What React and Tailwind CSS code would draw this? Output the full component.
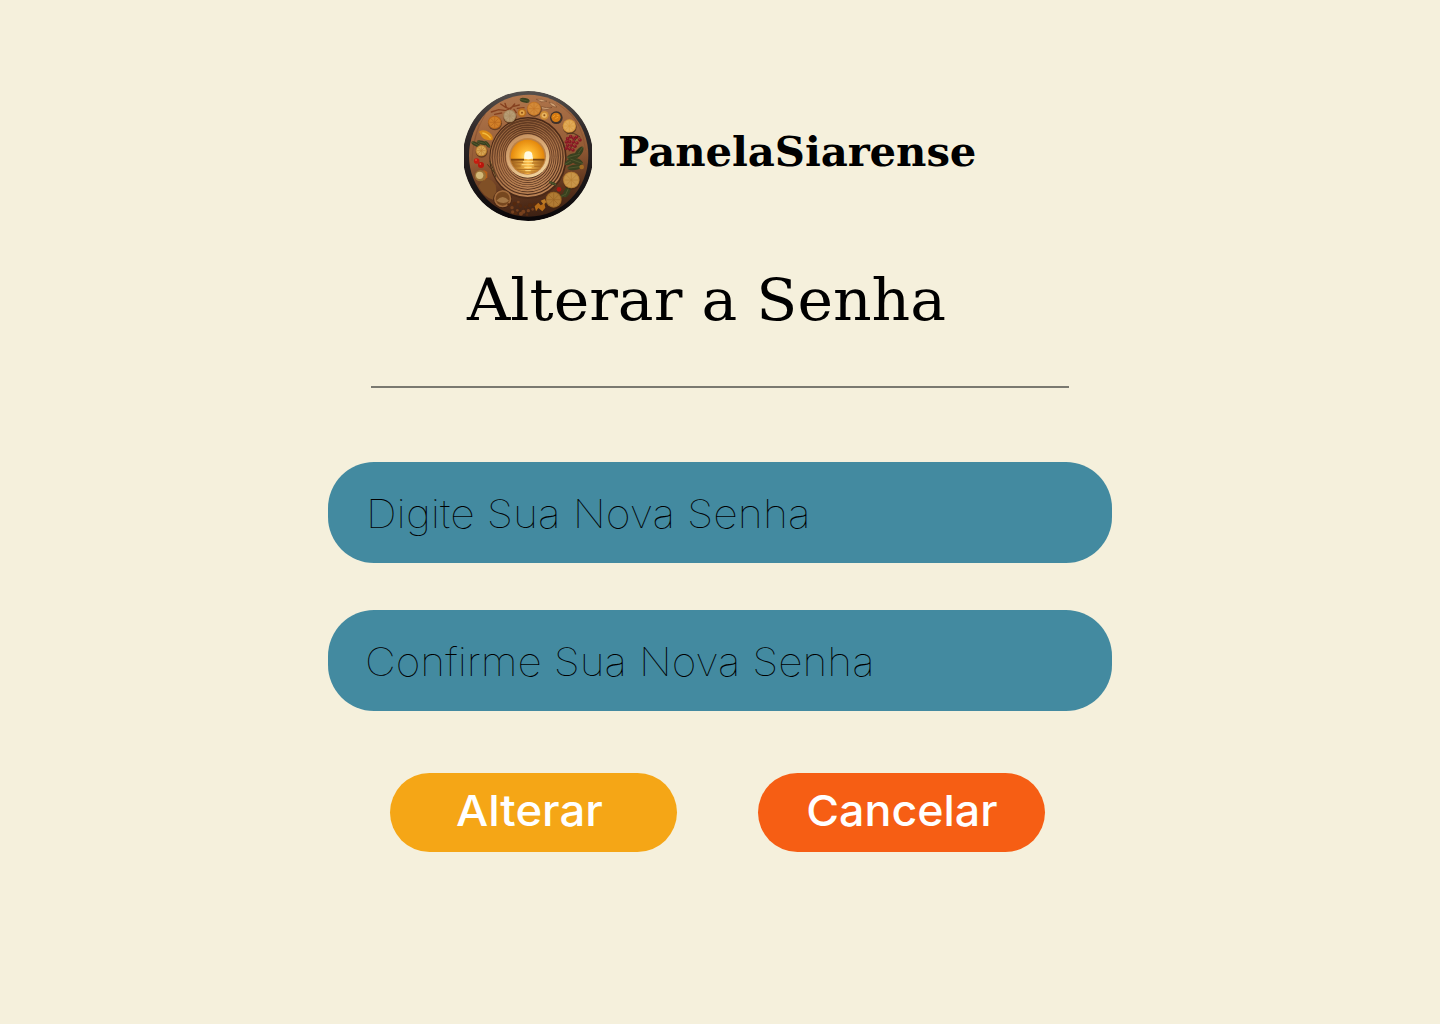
const citrus = [
  { x: 234, y: 74, r: 21, c: '#c47628', i: '#d38a38' },
  { x: 116, y: 115, r: 20, c: '#b8661c', i: '#d18029' },
  { x: 340, y: 126, r: 20, c: '#d7973d', i: '#e0aa58' },
  { x: 76, y: 200, r: 17, c: '#bd8030', i: '#d7a654' },
  { x: 346, y: 288, r: 25, c: '#b77e34', i: '#c89549' },
  { x: 293, y: 347, r: 24, c: '#9b6524', i: '#b07b34' },
  { x: 161, y: 96, r: 19, c: '#a98b62', i: '#b79d75' },
];

const rings = [112, 104, 97, 90, 84, 78, 72, 66];

const berries = [
  [335, 164], [344, 158], [353, 163], [362, 159], [372, 168], [331, 174], [341, 173],
  [352, 174], [363, 177], [335, 184], [346, 184], [357, 187], [341, 195], [351, 198], [331, 193],
];

const leaves = [
  [206, 49, 15, 7, 12], [60, 181, 15, 6, 28], [78, 176, 16, 6, 15], [94, 181, 12, 5, 50],
  [369, 205, 20, 9, -55], [352, 216, 20, 8, -15], [343, 232, 19, 8, -30], [362, 232, 20, 9, 20],
  [356, 250, 22, 8, -8], [333, 323, 18, 9, -65], [290, 298, 12, 4, 25], [318, 336, 13, 5, -25],
];

const crumbs = [
  [158, 362], [168, 371], [176, 359], [184, 379], [193, 366], [202, 383], [208, 369], [217, 380],
  [222, 364], [230, 376], [179, 388], [195, 389], [213, 392], [170, 384], [236, 362], [187, 354],
];

function Logo() {
  return (
    <svg className="block h-[130px] w-32 shrink-0" viewBox="24 21 384 390" role="img">
      <defs>
        <linearGradient id="rim" x1="0" y1="0" x2="0" y2="1">
          <stop offset="0" stopColor="#55504d" />
          <stop offset="0.3" stopColor="#302a2a" />
          <stop offset="1" stopColor="#0a0709" />
        </linearGradient>
        <linearGradient id="wood" x1="0.4" y1="0" x2="0.55" y2="1">
          <stop offset="0" stopColor="#b0764c" />
          <stop offset="0.5" stopColor="#935b35" />
          <stop offset="0.8" stopColor="#5c331c" />
          <stop offset="1" stopColor="#3b2013" />
        </linearGradient>
        <linearGradient id="ridge" x1="0.2" y1="0" x2="0.6" y2="1">
          <stop offset="0" stopColor="#a06a40" />
          <stop offset="0.5" stopColor="#ac7448" />
          <stop offset="1" stopColor="#b98153" />
        </linearGradient>
        <linearGradient id="groove" x1="0.2" y1="0" x2="0.6" y2="1">
          <stop offset="0" stopColor="#5e3820" />
          <stop offset="0.5" stopColor="#73462a" />
          <stop offset="1" stopColor="#472817" />
        </linearGradient>
        <linearGradient id="bowl" x1="0" y1="0" x2="0.5" y2="1">
          <stop offset="0" stopColor="#c08a58" />
          <stop offset="0.5" stopColor="#d7a774" />
          <stop offset="1" stopColor="#efcf98" />
        </linearGradient>
        <radialGradient id="sky" cx="0.48" cy="0.5" r="0.58">
          <stop offset="0" stopColor="#ffe98a" />
          <stop offset="0.35" stopColor="#fdb52d" />
          <stop offset="0.75" stopColor="#e58a0d" />
          <stop offset="1" stopColor="#b86209" />
        </radialGradient>
        <linearGradient id="sea" x1="0" y1="0" x2="1" y2="0">
          <stop offset="0" stopColor="#8e5114" />
          <stop offset="0.5" stopColor="#ffc04c" />
          <stop offset="1" stopColor="#8a4d15" />
        </linearGradient>
        <clipPath id="plate"><circle cx="216" cy="216" r="195" /></clipPath>
        <clipPath id="sun"><circle cx="215" cy="218" r="51" /></clipPath>
      </defs>
      <g clipPath="url(#plate)">
        <circle cx="216" cy="216" r="196" fill="url(#rim)" />
        <ellipse cx="218" cy="215" rx="179" ry="183" fill="url(#wood)" />
        <g fill="none" stroke="#77462a" strokeOpacity="0.5" strokeWidth="2">
          <path d="M70 120Q50 170 48 230M88 90Q60 140 55 180M330 72Q380 120 389 200M300 56Q350 90 370 125" />
        </g>
        <path d="M78 292Q100 274 119 304Q126 330 111 347Q83 340 67 306Z" fill="#805026" />
        <ellipse cx="216" cy="222" rx="116" ry="123" fill="#4a2917" />
        {rings.map((r) => (
          <g key={r}>
            <ellipse cx="215" cy={219 + (r - 66) * 0.05} rx={r} ry={r * 1.05} fill="url(#ridge)" />
            <ellipse cx="215" cy={218 + (r - 66) * 0.03} rx={r - 3.5} ry={r * 1.05 - 3.5} fill="url(#groove)" />
          </g>
        ))}
        <circle cx="215" cy="216" r="65" fill="url(#bowl)" />
        <circle cx="215" cy="217" r="55" fill="#bd8144" />
        <g clipPath="url(#sun)">
          <rect x="160" y="160" width="112" height="120" fill="url(#sky)" />
          <rect x="160" y="225" width="112" height="50" fill="url(#sea)" />
          <path d="M160 227H204M231 227H270" stroke="#7c470f" strokeWidth="5" />
          <path d="M164 236H202M228 237H266M168 246H194M235 247H263M181 257H250M190 264H240" stroke="#ad6c22" strokeWidth="3" />
          <path d="M201 233H231M197 242H233M205 250H227M208 260H224" stroke="#ffe08a" strokeWidth="3" />
          <path d="M204 224A13.500 14 0 1 1 231 224Z" fill="#fffbe2" />
          <circle cx="217" cy="214" r="12" fill="#fffbe2" />
        </g>
        {leaves.map(([x, y, rx, ry, a]) => (
          <g key={`${x}-${y}`} transform={`rotate(${a} ${x} ${y})`}>
            <ellipse cx={x} cy={y} rx={rx} ry={ry} fill="#39401f" />
            <path d={`M${x - rx} ${y}H${x + rx}`} stroke="#656b3a" strokeWidth="1.500" />
          </g>
        ))}
        <g fill="none" stroke="#85401f" strokeWidth="4" strokeLinecap="round">
          <path d="M106 84L128 77L150 80L170 68L190 63M134 60L149 70L163 75L176 60M151 70L147 58M184 73L204 71M116 91L137 87M174 76L181 86" />
        </g>
        <g fill="#d3a477" stroke="#6e4024" strokeWidth="1.500">
          <path d="M241 46Q257 43 273 52Q256 58 241 46ZM279 54Q293 56 303 69Q286 69 279 54ZM256 68Q270 73 288 70Q274 81 256 74Z" />
        </g>
        {citrus.map(({ x, y, r, c, i }) => (
          <g key={`${x}-${y}`}>
            <circle cx={x + 1} cy={y + 3} r={r + 1} fill="#43240f" opacity="0.6" />
            <circle cx={x} cy={y} r={r} fill={c} />
            <circle cx={x} cy={y} r={r - 3} fill={i} />
            <path
              d={`M${x - r + 4} ${y}H${x + r - 4}M${x} ${y - r + 4}V${y + r - 4}M${x - r * 0.6} ${y - r * 0.6}L${x + r * 0.6} ${y + r * 0.6}M${x + r * 0.6} ${y - r * 0.6}L${x - r * 0.6} ${y + r * 0.6}`}
              stroke={c} strokeWidth="2"
            />
          </g>
        ))}
        <g>
          <circle cx="198" cy="86" r="13" fill="#b86d1d" />
          <circle cx="198" cy="86" r="8" fill="#e1a44a" />
          <circle cx="198" cy="86" r="3" fill="#8e4e16" />
          <circle cx="265" cy="94" r="13" fill="#cd8c35" />
          <circle cx="265" cy="94" r="8" fill="#e7b461" />
          <circle cx="265" cy="94" r="3" fill="#92551c" />
          <circle cx="301" cy="101" r="19" fill="#40322a" />
          <circle cx="300" cy="100" r="14" fill="#d47a13" />
          <path d="M290 99L297 94M298 104L307 99M302 93L308 95" stroke="#ef9e28" strokeWidth="3" />
        </g>
        <path d="M69 143Q82 133 101 146Q114 157 109 168Q89 171 78 159Z" fill="#d88916" />
        <path d="M79 147Q94 149 104 163" stroke="#f2bb3e" strokeWidth="4" fill="none" />
        <path d="M332 150Q351 141 373 160M340 202L352 176L366 156" stroke="#4e3520" strokeWidth="3" fill="none" />
        {berries.map(([x, y]) => (
          <g key={`${x}-${y}`}>
            <circle cx={x} cy={y} r="5.500" fill="#861923" />
            <circle cx={x - 1} cy={y - 2} r="1.600" fill="#be4146" />
          </g>
        ))}
        <circle cx="62" cy="231" r="8.500" fill="#c61c10" />
        <circle cx="75" cy="243" r="9" fill="#b9150c" />
        <circle cx="60" cy="228" r="2.500" fill="#ee6848" />
        <circle cx="73" cy="240" r="2.500" fill="#ec5942" />
        <circle cx="309" cy="316" r="7" fill="#a71b12" />
        <path d="M82 257L94 264L94 280L84 290Z" fill="#b85e18" />
        <circle cx="73" cy="275" r="17" fill="#9a7135" />
        <circle cx="71" cy="274" r="11" fill="#d3b878" />
        <circle cx="377" cy="249" r="7" fill="#a46c23" />
        <path d="M101 230L111 254L120 280M94 241L116 267" stroke="#4b3a1c" strokeWidth="3" fill="none" />
        <circle cx="140" cy="345" r="28" fill="#452413" />
        <circle cx="140" cy="344" r="26" fill="#a06a3b" />
        <circle cx="140" cy="344" r="21" fill="#76471f" />
        <path d="M121 350Q140 328 159 350Q144 364 121 350Z" fill="#a47746" />
        {crumbs.map(([x, y], n) => (
          <circle key={`${x}-${y}`} cx={x} cy={y} r={4 + (n % 3)} fill={n % 2 ? '#76401d' : '#54290f'} />
        ))}
        <path d="M236 367L247 356L254 364L265 358L268 371L259 382L247 372L240 382Z" fill="#b56b18" />
        <path d="M254 350L266 345L271 354L263 362Z" fill="#bd7a24" />
      </g>
    </svg>
  );
}

function Field({ children, className }) {
  return (
    <div className="flex h-[101px] w-[784px] items-center rounded-[46px] bg-[#438aa0]">
      <span className={`mt-[3px] origin-left whitespace-nowrap font-['Inter'] text-[39px] leading-[48px] font-thin text-black ${className}`}>
        {children}
      </span>
    </div>
  );
}

export default function App() {
  return (
    <main className="flex h-[1024px] w-[1440px] flex-col items-center overflow-hidden bg-[#f5f0dc] pt-[91px] antialiased">
      <header className="flex h-[130px] w-[512px] gap-[26px]">
        <Logo />
        <span className="mt-[35px] origin-left scale-x-[1.02] whitespace-nowrap font-['DejaVu_Serif'] text-[41px] leading-[52px] font-bold tracking-[-0.1px] text-black">
          PanelaSiarense
        </span>
      </header>
      <h1 className="mt-[41px] h-[76px] w-[506px] origin-left scale-x-[1.053] whitespace-nowrap font-['DejaVu_Serif'] text-[57px] leading-[76px] text-black">
        Alterar a Senha
      </h1>
      <hr className="mt-[48px] h-[2px] w-[698px] border-0 bg-[#7a7970]" />
      <form className="mt-[74px] flex flex-col items-center">
        <div className="flex flex-col gap-[47px]">
          <Field className="ml-[38px] scale-x-[1.1]">Digite Sua Nova Senha</Field>
          <Field className="ml-[37px] scale-x-[1.09]">Confirme Sua Nova Senha</Field>
        </div>
        <div className="mt-[62px] mr-[5px] flex gap-[81px] font-['Inter'] text-[43px] leading-[52px] font-medium text-white">
          <button type="button" className="flex h-[79px] w-[287px] justify-center rounded-full bg-[#f5a616] pt-[11px] pr-2">
            <span className="scale-x-[1.058]">Alterar</span>
          </button>
          <button type="button" className="flex h-[79px] w-[287px] justify-center rounded-full bg-[#f65e14] pt-[11px]">
            <span className="scale-x-[1.04]">Cancelar</span>
          </button>
        </div>
      </form>
    </main>
  );
}
